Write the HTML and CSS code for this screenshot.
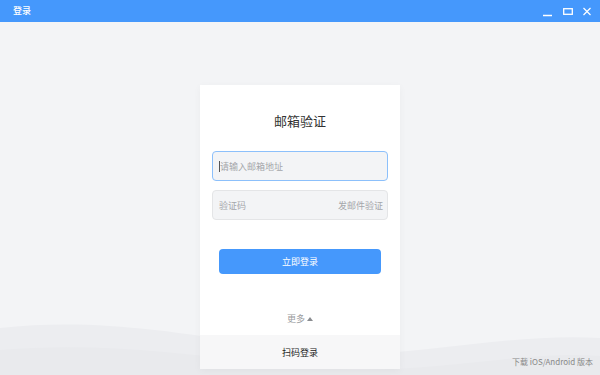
FILE: index.html
```html
<!DOCTYPE html>
<html lang="zh-CN">
<head>
<meta charset="utf-8">
<title>登录</title>
<link rel="stylesheet" href="styles.css">
</head>
<body>
<div class="titlebar">
  <span class="title">登录</span>
  <div class="controls">
    <svg class="ctl" width="10" height="10" viewBox="0 0 10 10"><path d="M0 8.5H9" stroke="#fff" stroke-width="1.5"/></svg>
    <svg class="ctl" width="10" height="10" viewBox="0 0 10 10"><rect x="0.7" y="1.7" width="8.6" height="5.6" fill="none" stroke="#fff" stroke-width="1.3"/></svg>
    <svg class="ctl" width="10" height="10" viewBox="0 0 10 10"><path d="M1.5 1L8.5 8M8.5 1L1.5 8" stroke="#fff" stroke-width="1.2"/></svg>
  </div>
</div>
<div class="main">
  <div class="card">
    <div class="card-body">
      <h1 class="heading">邮箱验证</h1>
      <div class="field focused"><span class="caret"></span><span class="ph">请输入邮箱地址</span></div>
      <div class="field"><span class="ph">验证码</span><span class="send">发邮件验证</span></div>
      <button class="submit">立即登录</button>
      <div class="more">更多 <span class="tri"></span></div>
    </div>
    <div class="card-foot">扫码登录</div>
  </div>
  <div class="download">下载 iOS/Android 版本</div>
</div>
</body>
</html>
```
FILE: styles.css
```css
* { box-sizing: border-box; }
html, body { margin: 0; padding: 0; }
body {
  width: 600px;
  height: 375px;
  overflow: hidden;
  font-family: "Noto Sans CJK SC", "Noto Sans", sans-serif;
  background-color: #f3f4f6;
  background-image: url("data:image/svg+xml,%3Csvg xmlns='http://www.w3.org/2000/svg' width='600' height='375'%3E%3Cpath d='M0 328 C90 318 170 330 290 350 C390 366 490 332 600 338 L600 375 L0 375 Z' fill='%23ecedf0'/%3E%3Cpath d='M0 350 C120 340 220 360 320 368 C430 376 520 350 600 356 L600 375 L0 375 Z' fill='%23e9eaed'/%3E%3C/svg%3E");
  background-repeat: no-repeat;
}
.titlebar {
  height: 22px;
  background: #4598fc;
  display: flex;
  align-items: center;
  justify-content: space-between;
  padding: 0 8px 0 13px;
}
.title { color: #fff; font-size: 9px; font-weight: 500; line-height: 22px; }
.controls { display: flex; gap: 9.5px; align-items: center; margin-top: 2px; }
.ctl { display: block; }
.main {
  height: 353px;
  display: grid;
  grid-template-areas: "a";
}
.card {
  grid-area: a;
  justify-self: center;
  align-self: start;
  margin-top: 63px;
  width: 200px;
  background: #fff;
  box-shadow: 0 2px 8px rgba(0,0,0,0.04);
}
.card-body {
  padding: 26px 12px 8px;
  display: flex;
  flex-direction: column;
}
.heading {
  margin: 0;
  font-size: 13px;
  font-weight: 400;
  line-height: 19px;
  text-align: center;
  color: #333;
}
.field {
  margin-top: 21px;
  height: 30px;
  border: 1px solid #e4e5e7;
  border-radius: 4px;
  background: #f3f4f6;
  display: flex;
  align-items: center;
  padding: 0 4px 0 6px;
  font-size: 9px;
  color: #a4a6aa;
}
.field + .field { margin-top: 9px; }
.field.focused { border-color: #8cc0fb; }
.caret { width: 1px; height: 11px; background: #555; margin-right: 0; }
.ph { flex: 1; }
.send { color: #a4a6aa; }
.submit {
  margin: 29px 7px 0;
  height: 25px;
  border: none;
  border-radius: 4px;
  background: #4598fc;
  color: #fff;
  font-family: inherit;
  font-size: 9px;
  padding: 0;
}
.more {
  margin-top: 37px;
  text-align: center;
  font-size: 9px;
  line-height: 16px;
  color: #9a9ca0;
}
.tri {
  display: inline-block;
  width: 0; height: 0;
  border-left: 3px solid transparent;
  border-right: 3px solid transparent;
  border-bottom: 4px solid #8a8c90;
  vertical-align: 1px;
}
.card-foot {
  height: 34px;
  background: #f7f7f8;
  display: flex;
  align-items: center;
  justify-content: center;
  font-size: 9px;
  color: #222;
}
.download {
  grid-area: a;
  justify-self: end;
  align-self: end;
  margin: 0 7px 8px 0;
  font-size: 8px;
  color: #888;
}
```
